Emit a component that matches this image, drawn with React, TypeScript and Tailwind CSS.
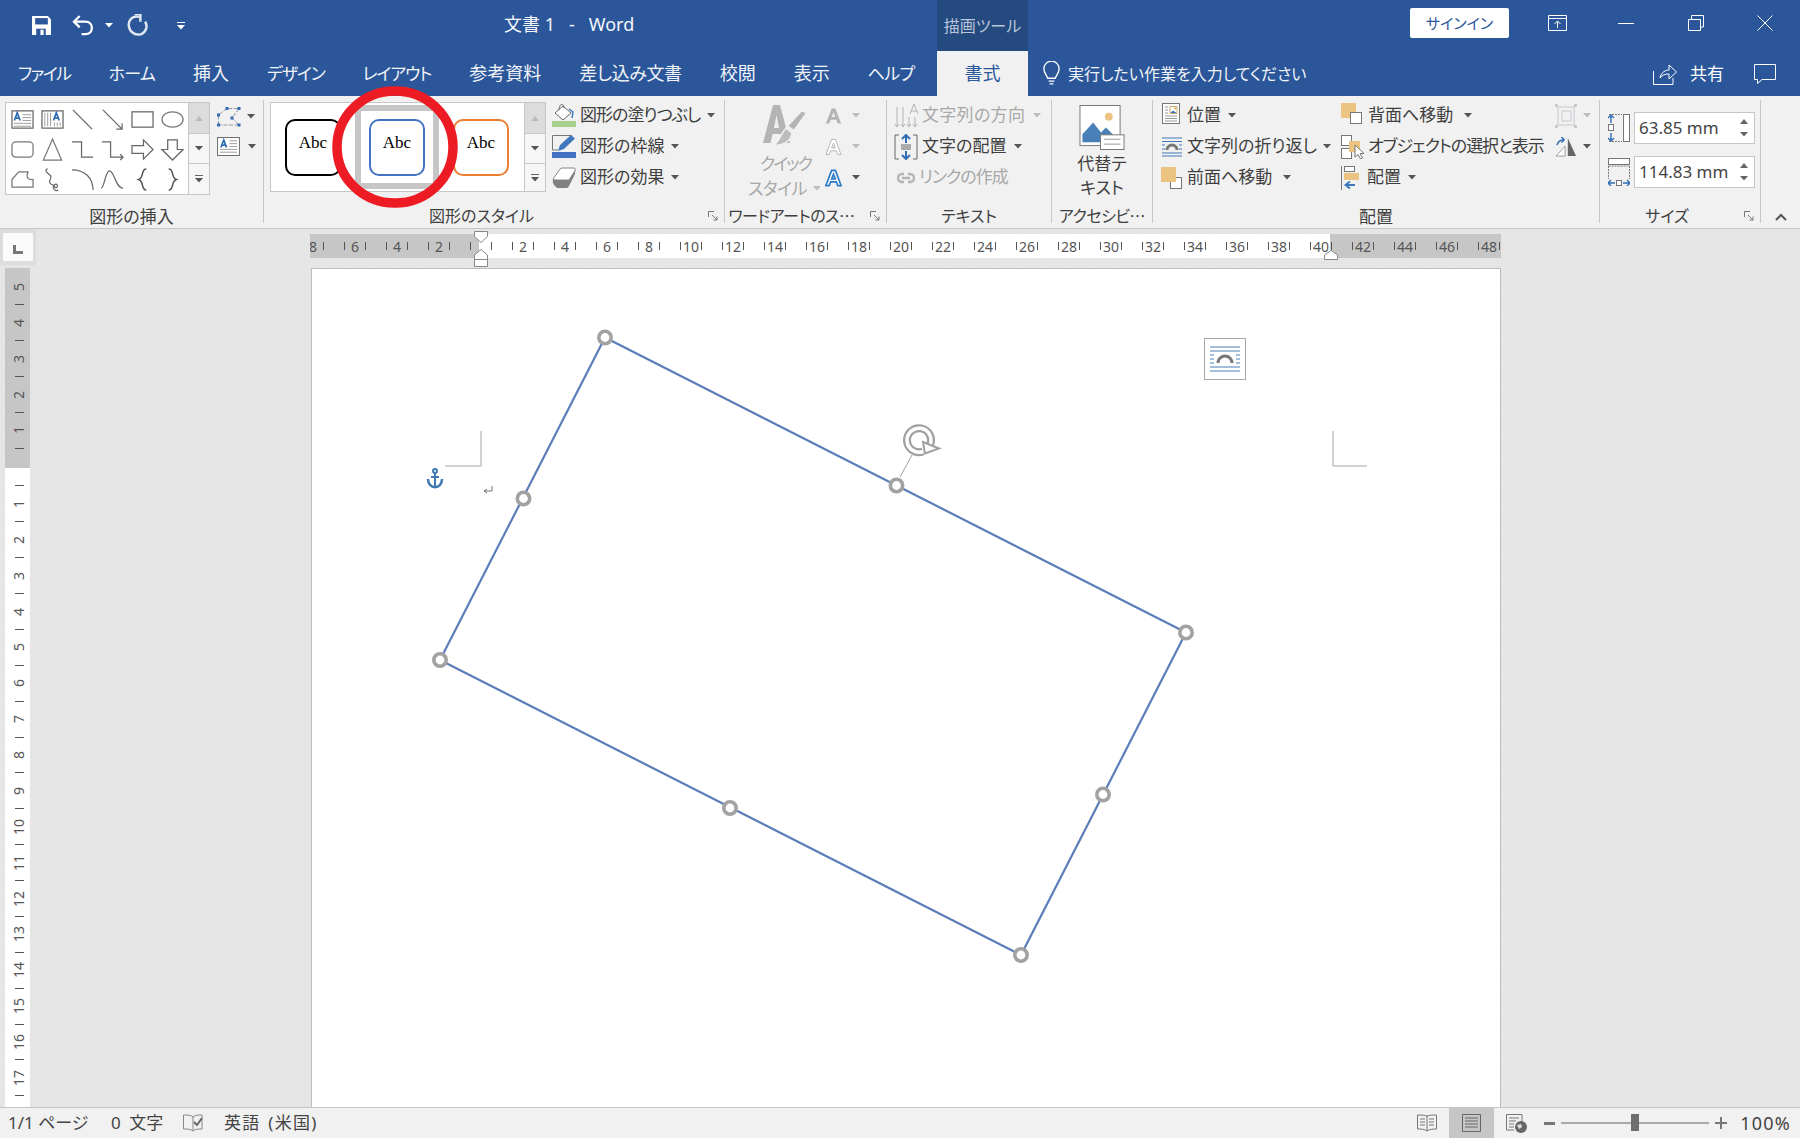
import type { ReactNode } from "react";

const Caret = ({ color = "#555555", cls = "" }: { color?: string; cls?: string }) => (
    <svg viewBox="0 0 8 5" className={`w-[8px] h-[5px] shrink-0 ${cls}`}>
        <path d="M0 0H8L4 4.5Z" fill={color} />
    </svg>
);

// ribbon command with a small icon, a label and maybe a dropdown caret
const Cmd = ({ icon, label, caret, muted, cls = "" }: { icon?: ReactNode; label: string; caret?: string; muted?: boolean; cls?: string }) => (
    <div className="h-[31px] flex items-center whitespace-nowrap">
        {icon}
        <span className={`text-[17px] leading-none pb-[2px] [font-feature-settings:'palt'] ${muted ? "text-[#a8a8a8]" : "text-[#3f3f3f]"} ${cls}`}>{label}</span>
        {caret && <Caret cls={caret} color={muted ? "#bdbdbd" : "#555555"} />}
    </div>
);

const Group = ({ label, width, children, launcher, labelCls = "text-[16px]" }: { label: string; width: string; children: ReactNode; launcher?: boolean; labelCls?: string }) => (
    <div className={`${width} h-full shrink-0 flex flex-col relative border-r border-[#c6c6c6]`}>
        <div className="h-[100px] shrink-0 flex">{children}</div>
        <div className={`h-[23px] shrink-0 text-center leading-[31px] text-[#3f3f3f] whitespace-nowrap font-['Noto_Sans_CJK_JP',sans-serif] [font-feature-settings:'palt'] ${labelCls}`}>{label}</div>
        {launcher && (
            <svg viewBox="0 0 10 10" className="absolute right-[6px] bottom-[2px] w-[10px] h-[10px]">
                <path d="M.5 6V.5H6M4 4l5 5M9 5.5V9H5.5" fill="none" stroke="#777" />
            </svg>
        )}
    </div>
);

const ScrollBtns = ({ h2 }: { h2?: boolean }) => (
    <div className="w-[22px] shrink-0 flex flex-col">
        <div className="h-[32px] bg-[#dcdcdc] border border-[#c6c6c6] flex items-center justify-center">
            <svg viewBox="0 0 8 5" className="w-[8px] h-[5px]"><path d="M0 5H8L4 0Z" fill="#bbb" /></svg>
        </div>
        <div className="h-[29px] bg-[#f6f6f6] border-x border-[#c6c6c6] flex items-center justify-center"><Caret /></div>
        <div className={`${h2 ? "h-[29px]" : "h-[32px]"} bg-[#f6f6f6] border border-[#c6c6c6] flex flex-col items-center justify-center gap-[2px]`}>
            <div className="w-[8px] h-[1px] bg-[#666]" />
            <Caret />
        </div>
    </div>
);

const shapeIcons: ReactNode[] = [
    <><rect x="1" y="3" width="22" height="18" fill="#fff" stroke="#666" /><path d="M12 7h9M12 10h9M12 13h9M3 16h18M3 19h18" stroke="#999" strokeWidth="1" /><path d="M3.5 13l3-8 3 8M4.5 10.5h4" fill="none" stroke="#2f6db5" strokeWidth="1.8" /></>,
    <><rect x="1" y="3" width="22" height="18" fill="#fff" stroke="#666" /><path d="M4 5v14M7 5v14M10 5v14M14 15v4M17 15v4M20 15v4" stroke="#999" strokeWidth="1" /><path d="M13 13l3-8 3 8M14 10.5h4" fill="none" stroke="#2f6db5" strokeWidth="1.8" /></>,
    <path d="M2 2L22 22" stroke="#666" fill="none" />,
    <path d="M2 2L22 22M22 16v6h-6" stroke="#666" fill="none" />,
    <rect x="1" y="4" width="22" height="16" fill="#fff" stroke="#666" />,
    <ellipse cx="12" cy="12" rx="11" ry="8" fill="#fff" stroke="#777" />,
    <rect x="1" y="4" width="22" height="16" rx="4" fill="#fff" stroke="#777" />,
    <path d="M12 1L21.5 23H2.5Z" fill="#fff" stroke="#777" />,
    <path d="M1 4H11V20H23" fill="none" stroke="#666" />,
    <path d="M1 4H10V20H23M20 17l3 3-3 3" fill="none" stroke="#666" />,
    <path d="M1 8H13V2L23 12L13 22V16H1Z" fill="#fff" stroke="#666" />,
    <path d="M7 2H17V12H23L12 23L1 12H7Z" fill="#fff" stroke="#666" />,
    <path d="M1 12L8 4H18C15 9 18 13 23 12V20H1Z" fill="#fff" stroke="#777" strokeLinejoin="round" />,
    <path d="M7 1C2 2 8 6 10 8C12 11 8 12 9 15C10 18 13 17 14 19C15 22 18 20 17 18C16 15 12 18 13 21C14 24 17 24 18 23" fill="none" stroke="#666" />,
    <path d="M1 2C14 2 23 10 23 23" fill="none" stroke="#666" />,
    <path d="M0 21C4 21 4 3 9 3C14 3 15 21 23 21" fill="none" stroke="#666" />,
    <path d="M16 1C10 1 14 10 8 12C14 14 10 23 16 23" fill="none" stroke="#555" strokeWidth="1.6" />,
    <path d="M8 1C14 1 10 10 16 12C10 14 14 23 8 23" fill="none" stroke="#555" strokeWidth="1.6" />,
];

const ShapeGallery = () => (
    <div className="ml-[5px] mt-[2px] w-[205px] h-[93px] flex shrink-0">
        <div className="flex-1 bg-white border border-r-0 border-[#c6c6c6] grid grid-cols-6 pt-[2px] pl-[1px]">
            {shapeIcons.map((s, i) => (
                <div key={i} className="h-[29.5px] flex items-center justify-center">
                    <svg viewBox="0 0 24 24" strokeWidth="1.3" className="w-[23px] h-[23px] overflow-visible">{s}</svg>
                </div>
            ))}
        </div>
        <ScrollBtns />
    </div>
);

const AbcStyle = ({ border, selected }: { border: string; selected?: boolean }) => (
    <div className={`w-[84px] h-[84px] shrink-0 flex items-center justify-center ${selected ? "border-[6px] border-[#c6c6c6]" : ""}`}>
        <div className={`w-[56px] h-[57px] shrink-0 rounded-[10px] border-2 ${border} flex items-center justify-center pb-[9px] font-['Liberation_Serif',serif] text-[17px] text-black`}>Abc</div>
    </div>
);

const FillIcon = () => (
    <svg viewBox="0 0 24 26" className="w-[24px] h-[26px] mr-[4px] shrink-0">
        <path d="M3 10L11 3L19 10L11 17Z" fill="#fff" stroke="#666" />
        <path d="M7 7C7 0 12 0 12 5" fill="none" stroke="#666" />
        <path d="M17 6L21 9L20 15" fill="none" stroke="#3f78bd" strokeWidth="1.5" />
        <rect y="18" width="24" height="6" fill="#a9d18e" />
    </svg>
);
const PenIcon = () => (
    <svg viewBox="0 0 24 26" className="w-[24px] h-[26px] mr-[4px] shrink-0">
        <path d="M20 1.5H.5V16H6" fill="none" stroke="#777" />
        <path d="M6 17L8 11L19 1L23 4.5L12 15Z" fill="#3f78bd" />
        <rect y="18" width="24" height="6" fill="#4472c4" />
    </svg>
);
const EraserIcon = () => (
    <svg viewBox="0 0 24 22" className="w-[24px] h-[22px] mr-[4px] shrink-0">
        <path d="M1 12L8 2Q9 1 10 1H22Q24 1 23 4L17 13H3Z" fill="#fff" stroke="#888" />
        <path d="M1 12Q0 15 2 18L5 21H15Q16 21 17 19L23 7V3L17 13H3Z" fill="#808080" />
    </svg>
);

const QuickStyle = () => (
    <svg viewBox="0 0 44 42" className="w-[44px] h-[42px]">
        <path d="M0 38L10 0H17L27 38H19.5L17.5 29H9.5L7.5 38ZM11 23H16L13.5 10Z" fill="#b4b4b4" />
        <path d="M43 8L31 25L25 21L39 6Z" fill="#b4b4b4" stroke="#f1f1f1" />
        <path d="M23 23L29 28C28 36 20 41 11 40C17 36 18 28 23 23Z" fill="#bcbcbc" stroke="#f1f1f1" strokeWidth="1.5" />
    </svg>
);

const WordA = ({ outline, blue }: { outline?: boolean; blue?: boolean }) => (
    <svg viewBox="0 0 18 18" className="w-[17px] h-[18px]">
        <path d="M1 17L7 1H11L17 17H13.5L12 13H6L4.5 17ZM7 10H11L9 5Z" fill={outline ? "#fff" : blue ? "#fff" : "#b4b4b4"} stroke={outline ? "#b4b4b4" : blue ? "#2f7ac7" : "none"} strokeWidth={blue ? 1.8 : 1} />
    </svg>
);

const PosIcon = () => (
    <svg viewBox="0 0 18 21" className="w-[18px] h-[21px] mr-[7px] -mt-[4px] shrink-0">
        <rect x=".5" y=".5" width="17" height="20" fill="#fff" stroke="#777" />
        <rect x="8" y="3.5" width="7" height="7" fill="#fff" stroke="#c9a873" />
        <circle cx="13" cy="5.5" r="1" fill="#e59a3c" />
        <path d="M8.5 10l2.5-2.5 3.5 2.5z" fill="#2f6db5" />
        <path d="M3 4h3M3 7h3M3 10h3M3 13h12M3 15.5h12M3 18h12" stroke="#999" />
    </svg>
);
const WrapIcon = () => (
    <svg viewBox="0 0 20 20" className="w-[20px] h-[20px] mr-[5px] shrink-0">
        <path d="M0 1h20M0 4.5h20M0 16h20M0 19h20M0 8h3M17 8h3M0 12h3M17 12h3" stroke="#3f78bd" />
        <path d="M5 13a5 5 0 0 1 10 0" fill="none" stroke="#777" strokeWidth="3" />
    </svg>
);
const ForwardIcon = () => (
    <svg viewBox="0 0 21 22" className="w-[21px] h-[22px] mr-[5px] -ml-[1px] shrink-0">
        <rect x="9.5" y="10.5" width="11" height="11" fill="#fff" stroke="#777" />
        <rect width="15" height="15" fill="#ebc482" />
    </svg>
);
const BackwardIcon = () => (
    <svg viewBox="0 0 21 21" className="w-[21px] h-[21px] mr-[6px] -mt-[4px] shrink-0">
        <rect width="15" height="15" fill="#ebc482" />
        <rect x="9.5" y="9.5" width="11" height="11" fill="#fff" stroke="#777" />
    </svg>
);
const SelectIcon = () => (
    <svg viewBox="0 0 24 24" className="w-[24px] h-[24px] mr-[3px] shrink-0">
        <rect x=".5" y=".5" width="10" height="10" fill="#fff" stroke="#777" />
        <rect x=".5" y="13.5" width="10" height="10" fill="#fff" stroke="#777" />
        <rect x="8" y="6" width="11" height="11" fill="#ebc482" />
        <path d="M14 10V22L17 19.5L19.5 24L21.5 23L19 18.5H23Z" fill="#fff" stroke="#777" />
    </svg>
);
const AlignIcon = () => (
    <svg viewBox="0 0 20 24" className="w-[20px] h-[24px] mr-[6px] shrink-0">
        <path d="M.5 0V24" stroke="#777" />
        <rect x="3.5" y=".5" width="10" height="5" fill="#fff" stroke="#777" />
        <rect x="3" y="7" width="15" height="7" fill="#ebc482" />
        <path d="M14 19H5M9 15.5L4.5 19L9 22.5" fill="none" stroke="#3f78bd" strokeWidth="2" />
    </svg>
);

const Spin = ({ value }: { value: string }) => (
    <div className="w-[121px] h-[32px] bg-white border border-[#c6c6c6] flex items-center overflow-hidden">
        <span className="w-[93px] pl-[4px] overflow-hidden whitespace-nowrap text-[17px] text-[#444]">{value}</span>
        <div className="flex flex-col gap-[8px] ml-[12px]">
            <svg viewBox="0 0 8 5" className="w-[8px] h-[5px]"><path d="M0 5H8L4 0Z" fill="#666" /></svg>
            <Caret color="#666" />
        </div>
    </div>
);

const rulerNums = ["8", "6", "4", "2", "", "2", "4", "6", "8", "10", "12", "14", "16", "18", "20", "22", "24", "26", "28", "30", "32", "34", "36", "38", "40", "42", "44", "46", "48"];
const tabs = [
    { t: "ファイル", c: "text-[17px] tracking-[-1.6px]" },
    { t: "ホーム", c: "text-[17px] tracking-[-0.7px]" },
    { t: "挿入", c: "text-[18px]" },
    { t: "デザイン", c: "text-[17px] tracking-[-1.2px]" },
    { t: "レイアウト", c: "text-[17px] tracking-[-1.1px]" },
    { t: "参考資料", c: "text-[18px]" },
    { t: "差し込み文書", c: "text-[18px] tracking-[-0.4px]" },
    { t: "校閲", c: "text-[18px]" },
    { t: "表示", c: "text-[18px]" },
    { t: "ヘルプ", c: "text-[17px] tracking-[-0.7px]" },
];

const Tick = () => <div className="w-[9px] h-[1px] bg-[#555]" />;
const VNum = ({ n }: { n: number }) => (
    <div className="h-[17.95px] pl-[4px] flex items-center justify-center"><span className="-rotate-90 text-[14px] leading-none text-[#555]">{n}</span></div>
);
const VTick = () => <div className="h-[17.95px] pl-[4px] flex items-center justify-center"><Tick /></div>;

export default function App() {
    const whiteNums = Array.from({ length: 17 }, (_, i) => i + 1);
    return (
        <div className="w-[1800px] h-[1138px] flex flex-col overflow-hidden bg-[#e6e6e6] font-['Noto_Sans','Noto_Sans_CJK_JP',sans-serif]">
            {/* title bar */}
            <div className="h-[51px] shrink-0 bg-[#2b579a] flex text-white relative">
                <div className="w-[504px] flex items-center">
                    <svg viewBox="0 0 18 18" className="w-[19px] h-[19px] ml-[32px]">
                        <path d="M0 0H15L18 3V18H0Z" fill="#fff" />
                        <rect x="3" y="2" width="12" height="6" fill="#2b579a" />
                        <rect x="4" y="12" width="9" height="6" fill="#2b579a" />
                        <rect x="8" y="13" width="3" height="5" fill="#fff" />
                    </svg>
                    <svg viewBox="0 0 24 22" className="w-[23px] h-[21px] ml-[21px]">
                        <path d="M8 1L2 7L8 13" fill="none" stroke="#fff" strokeWidth="2.4" />
                        <path d="M2 7H14C23 7 23 20 14 20H10" fill="none" stroke="#fff" strokeWidth="2.4" />
                    </svg>
                    <Caret color="#fff" cls="ml-[10px]" />
                    <svg viewBox="0 0 22 24" className="w-[21px] h-[23px] ml-[14px]">
                        <path d="M13 3C5 1 1 7 2 13C3 19 9 23 15 21C20 19 22 13 19 8" fill="none" stroke="#dfe6f1" strokeWidth="2.6" />
                        <path d="M8 0H14V8" fill="none" stroke="#dfe6f1" strokeWidth="2.6" />
                    </svg>
                    <div className="ml-[29px] flex flex-col items-center gap-[2px]">
                        <div className="w-[8px] h-[1px] bg-white" />
                        <Caret color="#fff" />
                    </div>
                </div>
                <div className="w-[433px] pb-[2px] flex items-center text-[18px] text-[#f4f6fa] whitespace-pre">文書 1   -   Word</div>
                <div className="w-[91px] bg-[#244a80] flex items-center justify-center text-[16px] text-[#b9c6da] whitespace-nowrap [font-feature-settings:'palt']">描画ツール</div>
                <div className="w-[481px] flex items-center justify-end">
                    <div className="w-[99px] h-[30px] mb-[5px] bg-white rounded-[2px] flex items-center justify-center text-[15px] text-[#2b579a] [font-feature-settings:'palt']">サインイン</div>
                </div>
                <div className="flex-1 flex items-center pb-[5px]">
                    <svg viewBox="0 0 19 16" className="w-[19px] h-[16px] ml-[39px]"><path d="M.5.5H18.5V15.5H.5ZM.5 3.5H18.5M9.5 13V6M6.5 9L9.5 6L12.5 9" fill="none" stroke="#fff" /></svg>
                    <div className="w-[16px] h-[1px] bg-white ml-[51px]" />
                    <svg viewBox="0 0 16 16" className="w-[16px] h-[16px] ml-[54px]"><path d="M.5 4.5H12.5V15.5H.5ZM3.5 4.5V.5H15.5V12H12.5" fill="none" stroke="#fff" /></svg>
                    <svg viewBox="0 0 16 16" className="w-[16px] h-[16px] ml-[53px]"><path d="M.5.5L15.5 15.5M15.5.5L.5 15.5" fill="none" stroke="#fff" /></svg>
                </div>
            </div>

            {/* tabs */}
            <div className="h-[45px] shrink-0 bg-[#2b579a] flex items-center text-white relative">
                <div className="w-[937px] shrink-0 flex items-center gap-[38px] pl-[18px] whitespace-nowrap [font-feature-settings:'palt'] text-[#f0f3f8]">
                    {tabs.map((x) => <span key={x.t} className={x.c}>{x.t}</span>)}
                </div>
                <div className="w-[91px] h-full bg-[#f1f1f1] flex items-center justify-center text-[18px] text-[#2b579a]">書式</div>
                <svg viewBox="0 0 20 26" className="w-[19px] h-[25px] ml-[14px]">
                    <path d="M6 18C5 14 2 13 2 8A8 8 0 0 1 18 8C18 13 15 14 14 18ZM7 21H13M8 24H12" fill="none" stroke="#fff" strokeWidth="1.4" />
                </svg>
                <span className="ml-[7px] text-[16px] whitespace-nowrap [font-feature-settings:'palt'] text-[#f0f3f8]">実行したい作業を入力してください</span>
                <div className="ml-auto flex items-center">
                    <svg viewBox="0 0 24 22" className="w-[24px] h-[22px]">
                        <path d="M.5 8V21.5H20V15M7 15C8 9 13 7 16 7V2L23.5 9L16 16V11C12 11 9 12 7 15Z" fill="none" stroke="#fff" />
                    </svg>
                    <span className="ml-[13px] text-[17px]">共有</span>
                    <svg viewBox="0 0 22 20" className="w-[22px] h-[20px] ml-[30px] mr-[24px]">
                        <path d="M.5.5H21.5V15.5H8L3.5 19.5V15.5H.5Z" fill="none" stroke="#fff" />
                    </svg>
                </div>
            </div>

            {/* ribbon */}
            <div className="h-[133px] shrink-0 bg-[#f1f1f1] border-b border-[#c6c6c6] flex pt-[4px] pb-[5px] relative">
                <Group label="図形の挿入" width="w-[264px]" labelCls="text-[17px]">
                    <ShapeGallery />
                    <div className="ml-[7px]">
                        <div className="h-[31px] pt-[2px] flex items-center">
                            <svg viewBox="0 0 24 20" className="w-[24px] h-[20px]">
                                <path d="M1.5 18V8L10 1.5H22L15 11L22 18H1.5" fill="none" stroke="#999" strokeDasharray="4 1.5" />
                                <path d="M0 6.5h3v3H0zM8.5 0h3v3h-3zM20.5 0h3v3h-3zM13.5 9.500h3v3h-3zM20.5 16.500h3v3h-3zM0 16.500h3v3H0z" fill="#2f6db5" />
                            </svg>
                            <Caret cls="ml-[6px]" />
                        </div>
                        <div className="h-[30px] flex items-center">
                            <svg viewBox="0 0 24 20" className="w-[23px] h-[19px]">
                                <rect x=".5" y=".5" width="23" height="19" fill="#fff" stroke="#666" />
                                <path d="M13 4h8M13 7h8M13 10h8M3 13h18M3 16h18" stroke="#999" />
                                <path d="M4 11l3-8 3 8M5 8.500h4" fill="none" stroke="#2f6db5" strokeWidth="1.8" />
                            </svg>
                            <Caret cls="ml-[8px]" />
                        </div>
                    </div>
                </Group>

                <Group label="図形のスタイル" width="w-[461px]" launcher labelCls="text-[16px] pr-[25px]">
                    <div className="ml-[6px] mt-[2px] w-[276px] h-[90px] flex shrink-0">
                        <div className="flex-1 min-w-0 bg-white border border-r-0 border-[#c6c6c6] flex items-center">
                            <AbcStyle border="border-black" />
                            <AbcStyle border="border-[#4472c4]" selected />
                            <AbcStyle border="border-[#ed7d31]" />
                        </div>
                        <ScrollBtns h2 />
                    </div>
                    <div className="ml-[6px]">
                        <Cmd icon={<FillIcon />} label="図形の塗りつぶし" caret="ml-[7px]" cls="tracking-[-1px]" />
                        <Cmd icon={<PenIcon />} label="図形の枠線" caret="ml-[7px]" />
                        <Cmd icon={<EraserIcon />} label="図形の効果" caret="ml-[7px]" />
                    </div>
                </Group>

                <Group label="ワードアートのス…" width="w-[162px]" launcher labelCls="text-[16px] pr-[28px] tracking-[-0.5px]">
                    <div className="w-[100px] shrink-0 flex flex-col pl-[15px] pt-[5px] text-[17px] text-[#a8a8a8] leading-[25px] [font-feature-settings:'palt']">
                        <div className="pl-[23px]"><QuickStyle /></div>
                        <span className="pl-[20px] mt-[4px] tracking-[-2px]">クイック</span>
                        <span className="pl-[8px] flex items-center gap-[6px] tracking-[-0.5px]">スタイル<Caret color="#bdbdbd" /></span>
                    </div>
                    <div>
                        <div className="h-[31px] flex items-center gap-[10px]"><WordA /><Caret color="#bdbdbd" /></div>
                        <div className="h-[31px] flex items-center gap-[10px]"><WordA outline /><Caret color="#bdbdbd" /></div>
                        <div className="h-[31px] flex items-center gap-[10px]"><WordA blue /><Caret /></div>
                    </div>
                </Group>

                <Group label="テキスト" width="w-[165px]">
                    <div className="pl-[7px]">
                        <Cmd muted label="文字列の方向" caret="ml-[8px]" cls="tracking-[0.3px]" icon={
                            <svg viewBox="0 0 24 26" className="w-[24px] h-[26px] mr-[4px] shrink-0">
                                <path d="M3 4V24M1 21l2 3 2-3M9 4V24M7 21l2 3 2-3M15 14V24M13 21l2 3 2-3M21 14V24M19 21l2 3 2-3M16 11l4-10 4 10M17 8h6" fill="none" stroke="#b4b4b4" />
                            </svg>
                        } />
                        <Cmd label="文字の配置" caret="ml-[8px]" icon={
                            <svg viewBox="0 0 24 26" className="w-[24px] h-[26px] mr-[4px] shrink-0">
                                <path d="M5 1H1V25H5M19 1H23V25H19M7 13H17M7 11H17M7 15H17" fill="none" stroke="#666" />
                                <path d="M12 2V9M8 5l4-4 4 4M12 24V17M8 21l4 4 4-4" fill="none" stroke="#2f6db5" strokeWidth="2" />
                            </svg>
                        } />
                        <Cmd muted label="リンクの作成" cls="tracking-[-1px]" icon={
                            <svg viewBox="0 0 18 12" className="w-[18px] h-[12px] ml-[3px] mr-[4px] shrink-0">
                                <path d="M7 2H5A4 4 0 0 0 5 10H7M11 2H13A4 4 0 0 1 13 10H11M5 6H13" fill="none" stroke="#b4b4b4" strokeWidth="2.4" />
                            </svg>
                        } />
                    </div>
                </Group>

                <Group label="アクセシビ…" width="w-[101px]" labelCls="text-[16px] tracking-[-0.5px]">
                    <div className="w-full flex flex-col items-center pt-[5px] text-[17px] text-[#3f3f3f] leading-[24px] [font-feature-settings:'palt']">
                        <svg viewBox="0 0 46 46" className="w-[46px] h-[46px] mb-[2px]">
                            <rect x=".5" y=".5" width="41" height="41" fill="#fff" stroke="#777" />
                            <circle cx="30" cy="12" r="4" fill="#ebc482" />
                            <path d="M3 38V30L14 18L22 28L27 23L38 34V38Z" fill="#4a80b8" />
                            <rect x="21.5" y="30.5" width="24" height="15" fill="#fff" stroke="#777" />
                            <path d="M25 35H42M25 40H42" stroke="#999" />
                        </svg>
                        <span>代替テ</span>
                        <span>キスト</span>
                    </div>
                </Group>

                <Group label="配置" width="w-[447px]" labelCls="text-[17px]">
                    <div className="w-[188px] pl-[9px] shrink-0">
                        <Cmd icon={<PosIcon />} label="位置" caret="ml-[7px]" />
                        <Cmd icon={<WrapIcon />} label="文字列の折り返し" caret="ml-[6px]" />
                        <Cmd icon={<ForwardIcon />} label="前面へ移動" caret="ml-[11px]" />
                    </div>
                    <div className="w-[214px] shrink-0">
                        <Cmd icon={<BackwardIcon />} label="背面へ移動" caret="ml-[11px]" />
                        <Cmd icon={<SelectIcon />} label="オブジェクトの選択と表示" cls="tracking-[-1.1px]" />
                        <Cmd icon={<AlignIcon />} label="配置" caret="ml-[7px]" />
                    </div>
                    <div className="shrink-0">
                        <div className="h-[31px] flex items-center gap-[6px]">
                            <svg viewBox="0 0 22 24" className="w-[22px] h-[24px]">
                                <path d="M3 3H19V21H3Z" fill="none" stroke="#c8c8d0" />
                                <path d="M7 7H16V17H7Z" fill="none" stroke="#c8c8d0" />
                                <path d="M0 0h3v3H0zM19 0h3v3h-3zM0 21h3v3H0zM19 21h3v3h-3z" fill="#c8c8c8" />
                            </svg>
                            <Caret color="#bdbdbd" />
                        </div>
                        <div className="h-[31px] flex items-center gap-[6px]">
                            <svg viewBox="0 0 24 22" className="w-[22px] h-[20px]">
                                <path d="M1 21L11 10V21Z" fill="#fff" stroke="#999" />
                                <path d="M14 1V21H23Z" fill="#666" />
                                <path d="M2 9C3 5 6 3 10 3M7 0l3 3-3 3" fill="none" stroke="#2f6db5" strokeWidth="1.6" />
                            </svg>
                            <Caret />
                        </div>
                    </div>
                </Group>

                <Group label="サイズ" width="w-[161px]" launcher labelCls="text-[16px] pr-[26px]">
                    <div className="pl-[8px] pt-[12px] flex flex-col gap-[12px]">
                        <div className="flex items-center gap-[4px]">
                            <svg viewBox="0 0 22 28" className="w-[22px] h-[28px]">
                                <rect x="15.5" y=".5" width="6" height="27" fill="#fff" stroke="#777" />
                                <path d="M1 .5H14M1 27.5H14" stroke="#777" strokeDasharray="2 1" />
                                <path d="M3 1V9M0 4l3-3 3 3M3 27V19M0 24l3 3 3-3" fill="none" stroke="#2f6db5" strokeWidth="1.4" />
                                <rect x=".5" y="10.5" width="5" height="6" fill="#fff" stroke="#777" />
                            </svg>
                            <Spin value="63.85 mm" />
                        </div>
                        <div className="flex items-center gap-[4px]">
                            <svg viewBox="0 0 22 28" className="w-[22px] h-[28px]">
                                <rect x=".5" y=".5" width="21" height="6" fill="#fff" stroke="#777" />
                                <path d="M.5 8V21M21.5 8V21M.5 8H21.5" stroke="#777" strokeDasharray="2 1" fill="none" />
                                <path d="M0 25H7M3 22l-3 3 3 3M22 25H15M19 22l3 3-3 3" fill="none" stroke="#2f6db5" strokeWidth="1.4" />
                                <rect x="8.5" y="22.5" width="5" height="5" fill="#fff" stroke="#777" />
                            </svg>
                            <Spin value="114.83 mm" />
                        </div>
                    </div>
                </Group>

                <div className="flex-1 flex items-end justify-center pb-[2px]">
                    <svg viewBox="0 0 12 8" className="w-[12px] h-[8px]"><path d="M1 7L6 2L11 7" fill="none" stroke="#555" strokeWidth="2" /></svg>
                </div>

                {/* annotation circle drawn on the picture */}
                <svg viewBox="0 0 122 122" className="absolute left-[334px] -top-[10px] w-[122px] h-[122px] overflow-visible">
                    <ellipse cx="61" cy="61" rx="58" ry="56" fill="none" stroke="#ed1c24" strokeWidth="9.5" />
                </svg>
            </div>

            {/* document area */}
            <div className="flex-1 min-h-0 flex bg-[radial-gradient(#e1e1e1_1px,transparent_1px)] bg-[length:3px_3px]">
                <div className="w-[36px] shrink-0 flex flex-col">
                    <div className="h-[36px] bg-[#dcdcdc] flex items-center justify-center">
                        <div className="w-[30px] h-[28px] bg-[#fbfbfb] flex items-center justify-center pt-[5px]">
                            <svg viewBox="0 0 10 9" className="w-[10px] h-[9px]"><path d="M0 0H3V6H10V9H0Z" fill="#777" /></svg>
                        </div>
                    </div>
                    <div className="ml-[5px] w-[25px] mt-[3px] flex-1 min-h-0 overflow-hidden">
                        <div className="h-[200px] bg-[#c6c6c6] pt-[10px]">
                            <VNum n={5} /><VTick /><VNum n={4} /><VTick /><VNum n={3} /><VTick /><VNum n={2} /><VTick /><VNum n={1} /><VTick />
                        </div>
                        <div className="h-full bg-white pt-[9px]">
                            {whiteNums.map((n) => (
                                <div key={n}><VTick /><VNum n={n} /></div>
                            ))}
                            <VTick />
                        </div>
                    </div>
                </div>

                <div className="ml-[274px] w-[1191px] flex flex-col relative">
                    {/* ruler */}
                    <div className="mt-[5px] h-[24px] bg-[#c6c6c6] relative overflow-hidden shrink-0">
                        <div className="absolute left-[169px] w-[851px] inset-y-0 bg-white" />
                        <div className="relative -ml-[18px] h-full flex text-[14px] text-[#555]">
                            {rulerNums.map((n, i) => (
                                <div key={i} className="w-[42px] shrink-0 px-[10px] flex items-center justify-between">
                                    <div className="w-[1px] h-[8px] bg-[#555]" />
                                    <span className="w-[18px] text-center leading-none pt-[2px]">{n}</span>
                                    <div className="w-[1px] h-[8px] bg-[#555]" />
                                </div>
                            ))}
                        </div>
                    </div>
                    {/* indent and margin markers sit over the ruler */}
                    <svg viewBox="0 0 14 36" className="absolute left-[164px] top-[2px] w-[14px] h-[36px]">
                        <path d="M.5.5H13.5V5.5L7 11.5L.5 5.5Z" fill="#fff" stroke="#888" />
                        <path d="M7 18.5L13.5 24V35.5H.5V24Z" fill="#fff" stroke="#888" />
                        <path d="M.5 28.5H13.5" stroke="#888" />
                    </svg>
                    <svg viewBox="0 0 14 10" className="absolute left-[1014px] top-[21px] w-[14px] h-[10px]">
                        <path d="M7 .5L13.5 5V9.5H.5V5Z" fill="#fff" stroke="#888" />
                    </svg>
                    {/* page */}
                    <div className="mt-[10px] ml-[1px] flex-1 bg-white border-x border-t border-[#bdbdbd] relative">
                        <svg viewBox="312 269 1188 838" className="absolute inset-0 w-full h-full overflow-visible">
                            <path d="M445 466H481V431M1333 431V466H1367" fill="none" stroke="#a6a6a6" />
                            <path d="M484 491H492V486M484 491l3-2M484 491l3 2" fill="none" stroke="#777" />
                            <circle cx="435" cy="471" r="2" fill="none" stroke="#3f78b5" strokeWidth="2" />
                            <path d="M435 473V488M431 477H439" stroke="#3f78b5" strokeWidth="2" />
                            <path d="M428 479C428 490 442 490 442 479" fill="none" stroke="#3f78b5" strokeWidth="2.5" />
                            <path d="M605 337.5L1186 632.5L1021 955L440 660Z" fill="none" stroke="#5b7db8" strokeWidth="2.2" />
                            <path d="M912 455L900 477" stroke="#a0a0a0" />
                            <path d="M923 451.5A12 12 0 1 1 930 445" fill="none" stroke="#a0a0a0" strokeWidth="8" />
                            <path d="M923 451.5A12 12 0 1 1 930 445" fill="none" stroke="#fff" strokeWidth="3.5" />
                            <path d="M923 442L939 448.5L925 453.5Z" fill="#fff" stroke="#a0a0a0" strokeWidth="2" />
                            {[[605, 337.5], [1186, 632.5], [1021, 955], [440, 660], [523.5, 498.5], [896.5, 485.5], [1103, 794.5], [730, 808]].map(([x, y]) => (
                                <circle key={x} cx={x} cy={y} r="6.2" fill="#fff" stroke="#a2a2a2" strokeWidth="3.6" />
                            ))}
                        </svg>
                        <div className="absolute left-[892px] top-[69px] w-[42px] h-[42px] bg-white border border-[#a8a8a8] flex items-center justify-center">
                            <svg viewBox="0 0 30 26" className="w-[30px] h-[26px]">
                                <path d="M0 1H30M0 5H30M0 9H4M26 9H30M0 13H4M26 13H30M0 17H4M26 17H30M0 21H30M0 25H30" stroke="#4a80b8" />
                                <path d="M8 17A7 7 0 0 1 22 17" fill="none" stroke="#777" strokeWidth="3" />
                            </svg>
                        </div>
                    </div>
                </div>
            </div>

            {/* status bar */}
            <div className="h-[31px] shrink-0 bg-[#f1f1f1] border-t border-[#c6c6c6] flex items-center text-[17px] text-[#444] whitespace-nowrap">
                <span className="ml-[8px] w-[79px]">1/1 ページ</span>
                <span className="ml-[24px] w-[51px] [word-spacing:4px]">0 文字</span>
                <svg viewBox="0 0 20 18" className="w-[20px] h-[18px] ml-[21px]">
                    <path d="M10 3C8 1 4 1 .5 1V15C4 15 8 15 10 17C12 15 15 15 19 15V1C15 1 12 1 10 3V17" fill="none" stroke="#888" />
                    <path d="M11 8L14 11L19 4" fill="none" stroke="#666" strokeWidth="2" />
                </svg>
                <span className="ml-[21px] tracking-[1.3px] [word-spacing:2px]">英語 (米国)</span>
                <div className="ml-auto flex items-center h-full">
                    <svg viewBox="0 0 20 18" className="w-[20px] h-[18px]">
                        <path d="M10 2C7 1 4 1 .5 1V15C4 15 7 15 10 17C13 15 16 15 19.5 15V1C16 1 13 1 10 2V17M3 5H8M3 8H8M3 11H8M12 5H17M12 8H17M12 11H17" fill="none" stroke="#777" />
                    </svg>
                    <div className="ml-[12px] w-[45px] h-full bg-[#c6c6c6] flex items-center justify-center">
                        <svg viewBox="0 0 19 18" className="w-[19px] h-[18px]">
                            <path d="M.5.5H18.5V17.5H.5ZM3 4H16M3 7H16M3 10H16M3 13H16" fill="none" stroke="#666" />
                        </svg>
                    </div>
                    <svg viewBox="0 0 21 19" className="w-[21px] h-[19px] ml-[12px]">
                        <path d="M.5.5H16V8M.5.5V16H8M3 4H13M3 7H10M3 10H8M3 13H8" fill="none" stroke="#777" />
                        <circle cx="15" cy="13" r="6" fill="#666" />
                        <path d="M11 11L15 10L16 13L13 15Z" fill="#ddd" />
                    </svg>
                    <div className="ml-[17px] w-[11px] h-[3px] bg-[#777]" />
                    <div className="ml-[6px] w-[148px] h-[2px] bg-[#aaa] relative">
                        <div className="absolute left-[70px] -top-[8px] w-[8px] h-[17px] bg-[#6e6e6e]" />
                    </div>
                    <div className="ml-[6px] w-[12px] h-[12px] relative">
                        <div className="absolute inset-x-0 top-[5px] h-[2px] bg-[#777]" />
                        <div className="absolute inset-y-0 left-[5px] w-[2px] bg-[#777]" />
                    </div>
                    <span className="ml-[13px] mr-[9px] text-[18px] tracking-[1.2px]">100%</span>
                </div>
            </div>
        </div>
    );
}
